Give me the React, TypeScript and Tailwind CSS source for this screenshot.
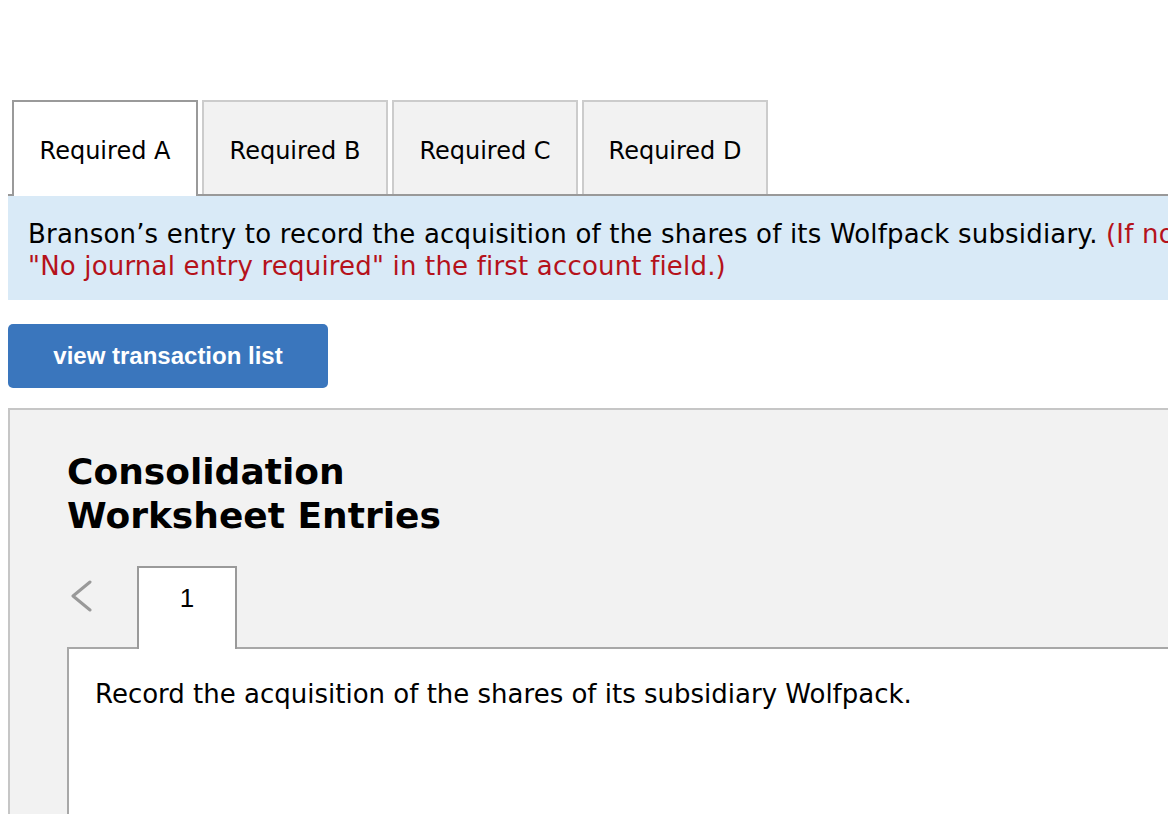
const verdana = { fontFamily: '"DejaVu Sans", Verdana, sans-serif' };
const arial = { fontFamily: '"Liberation Sans", Arial, sans-serif' };

const tabs = ['Required A', 'Required B', 'Required C', 'Required D'];

export default function App() {
  return (
    <div className="w-[1168px] h-[814px] overflow-hidden bg-white text-black" style={verdana}>
      <div className="w-[1700px] pt-[100px] pl-[8px]">
        {/* Required tabs */}
        <div className="flex gap-[4px] pl-[4px] border-b-2 border-[#999]">
          {tabs.map((t, i) =>
            i === 0 ? (
              <div
                key={t}
                className="w-[186px] h-[96px] -mb-[2px] bg-white border-2 border-b-0 border-[#9a9a9a] flex items-center justify-center text-[24px] pt-[4px]"
              >
                {t}
              </div>
            ) : (
              <div
                key={t}
                className="w-[186px] h-[94px] bg-[#f2f2f2] border-2 border-b-0 border-[#cccccc] flex items-center justify-center text-[24px] pt-[6px]"
              >
                {t}
              </div>
            )
          )}
        </div>

        {/* Instructions */}
        <div className="bg-[#d9eaf7] pt-[22px] pb-[18px] pl-[20px] text-[26px] leading-[32px] tracking-[0.18px] whitespace-nowrap">
          Branson’s entry to record the acquisition of the shares of its Wolfpack subsidiary.{' '}
          <span className="text-[#b5121b]">(If no journal entry is required for a transaction/event, select</span>
          <br />
          <span className="text-[#b5121b]">"No journal entry required" in the first account field.)</span>
        </div>

        <button
          className="mt-[24px] w-[320px] h-[64px] rounded-[5px] bg-[#3a76bd] text-white font-bold text-[24px] block"
          style={arial}
        >
          view transaction list
        </button>

        {/* Worksheet panel */}
        <div className="mt-[20px] bg-[#f2f2f2] border-t-2 border-l-2 border-[#c6c6c6] pl-[57px] pt-[40px]">
          <h2 className="font-bold text-[36px] leading-[44px]">
            Consolidation
            <br />
            Worksheet Entries
          </h2>

          <div className="mt-[28px] flex items-start">
            <div className="w-[70px] h-[82px] pl-[2px] pt-[14px]">
              <svg width="24" height="32" viewBox="0 0 24 32" fill="none">
                <polyline
                  points="21,2 4,16 21,30"
                  stroke="#999999"
                  strokeWidth="3"
                  strokeLinecap="round"
                  strokeLinejoin="round"
                />
              </svg>
            </div>
            <div
              className="w-[100px] h-[83px] -mb-[2px] bg-white border-2 border-b-0 border-[#9a9a9a] text-center pt-[15px] text-[26px] leading-[30px] relative z-10"
              style={arial}
            >
              1
            </div>
          </div>

          <div className="-mt-[1px] bg-white border-t-2 border-l-2 border-[#a8a8a8] h-[200px] pl-[26px] pt-[29px] text-[26px] leading-[32px] whitespace-nowrap">
            Record the acquisition of the shares of its subsidiary Wolfpack.
          </div>
        </div>
      </div>
    </div>
  );
}
